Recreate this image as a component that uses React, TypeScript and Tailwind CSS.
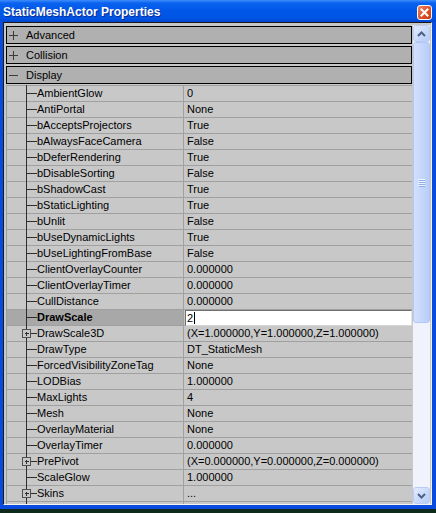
import React from 'react';

type Row = { name: string; value: string; expandable?: boolean; selected?: boolean };

const ROWS: Row[] = [
  { name: 'AmbientGlow', value: '0' },
  { name: 'AntiPortal', value: 'None' },
  { name: 'bAcceptsProjectors', value: 'True' },
  { name: 'bAlwaysFaceCamera', value: 'False' },
  { name: 'bDeferRendering', value: 'True' },
  { name: 'bDisableSorting', value: 'False' },
  { name: 'bShadowCast', value: 'True' },
  { name: 'bStaticLighting', value: 'True' },
  { name: 'bUnlit', value: 'False' },
  { name: 'bUseDynamicLights', value: 'True' },
  { name: 'bUseLightingFromBase', value: 'False' },
  { name: 'ClientOverlayCounter', value: '0.000000' },
  { name: 'ClientOverlayTimer', value: '0.000000' },
  { name: 'CullDistance', value: '0.000000' },
  { name: 'DrawScale', value: '2', selected: true },
  { name: 'DrawScale3D', value: '(X=1.000000,Y=1.000000,Z=1.000000)', expandable: true },
  { name: 'DrawType', value: 'DT_StaticMesh' },
  { name: 'ForcedVisibilityZoneTag', value: 'None' },
  { name: 'LODBias', value: '1.000000' },
  { name: 'MaxLights', value: '4' },
  { name: 'Mesh', value: 'None' },
  { name: 'OverlayMaterial', value: 'None' },
  { name: 'OverlayTimer', value: '0.000000' },
  { name: 'PrePivot', value: '(X=0.000000,Y=0.000000,Z=0.000000)', expandable: true },
  { name: 'ScaleGlow', value: '1.000000' },
  { name: 'Skins', value: '...', expandable: true },
  { name: '', value: '' },
];

const CATEGORIES = [
  { label: 'Advanced', open: false },
  { label: 'Collision', open: false },
  { label: 'Display', open: true },
];

function Tree({ expandable, blank }: { expandable?: boolean; blank?: boolean }) {
  const stroke = '#2e2e2e';
  return (
    <svg width="30" height="15" className="shrink-0 overflow-visible" shapeRendering="crispEdges">
      {expandable ? (
        <>
          <line x1="19.5" y1="-1" x2="19.5" y2="3.5" stroke={stroke} />
          <rect x="15.5" y="3.5" width="8" height="8" fill="none" stroke="#505050" />
          <line x1="17.5" y1="7.5" x2="22" y2="7.5" stroke={stroke} />
          <line x1="19.5" y1="5.5" x2="19.5" y2="10" stroke={stroke} />
          <line x1="19.5" y1="11.5" x2="19.5" y2="16" stroke={stroke} />
          <line x1="23.5" y1="7.5" x2="30" y2="7.5" stroke={stroke} />
        </>
      ) : (
        <>
          <line x1="19.5" y1="-1" x2="19.5" y2="16" stroke={stroke} />
          {!blank && <line x1="19.5" y1="7.5" x2="30" y2="7.5" stroke={stroke} />}
        </>
      )}
    </svg>
  );
}

function Category({ label, open }: { label: string; open: boolean }) {
  return (
    <div className="flex h-[18px] w-[406px] items-center border border-black bg-[#b0b0b0]">
      <svg width="9" height="9" className="ml-[2px] shrink-0" shapeRendering="crispEdges">
        <line x1="0" y1="4.5" x2="9" y2="4.5" stroke="#3a3a3a" />
        {!open && <line x1="4.5" y1="0" x2="4.5" y2="9" stroke="#3a3a3a" />}
      </svg>
      <span className="ml-[8px] leading-[16px]">{label}</span>
    </div>
  );
}

function PropRow({ row }: { row: Row }) {
  return (
    <div className="flex h-[16px] border-b border-[#a0a0a0]">
      <div className={`flex w-[176px] items-center ${row.selected ? 'bg-[#a8a8a8] font-bold' : ''}`}>
        <Tree expandable={row.expandable} blank={!row.name} />
        <span className="whitespace-nowrap leading-[15px]">{row.name}</span>
      </div>
      <div className="flex w-[229px] items-center border-l border-[#a0a0a0]">
        {row.selected ? (
          <div className="z-10 ml-px -mb-px flex h-[16px] flex-1 items-center self-start border border-[#6f6f6f] border-b-[#d6d6d6] border-r-[#e4e4e4] bg-white pl-px">
            <span className="leading-[14px]">{row.value}</span>
            <span className="ml-[1px] h-[12px] w-px bg-black" />
          </div>
        ) : (
          <span className="whitespace-nowrap pl-[3px] leading-[15px]">{row.value}</span>
        )}
      </div>
    </div>
  );
}

function ScrollButton({ up }: { up?: boolean }) {
  return (
    <div className="flex h-[17px] w-[17px] shrink-0 items-center justify-center rounded-[3px] border border-[#bccdf4] bg-[linear-gradient(135deg,#e3ecff_0%,#c9d9fb_55%,#b6cbf7_100%)]">
      <svg width="9" height="6" viewBox="0 0 9 6">
        <polyline
          points={up ? '1,5 4.5,1.5 8,5' : '1,1 4.5,4.5 8,1'}
          fill="none"
          stroke="#4d6185"
          strokeWidth="2"
        />
      </svg>
    </div>
  );
}

export default function App() {
  return (
    <div className="h-[513px] w-[436px] overflow-hidden bg-[#0d2a1b] font-['Liberation_Sans',Arial,sans-serif] text-[11px] text-black">
      <div className="flex h-[509px] flex-col bg-[#0a4bdf]">
        <div className="flex h-[22px] shrink-0 items-center justify-between bg-[linear-gradient(180deg,#3e8dfc_0%,#0a62ef_14%,#0057e7_50%,#0053e2_86%,#0343cc_100%)] pl-[3px] pr-[4px] pt-[2px]">
          <span className="text-[12px] font-bold leading-none text-white [text-shadow:1px_1px_0_#0b2a92]">
            StaticMeshActor Properties
          </span>
          <div className="flex h-[15px] w-[15px] items-center justify-center rounded-[3px] border border-white bg-[linear-gradient(135deg,#f08a62_0%,#e0542c_50%,#c63b17_100%)]">
            <svg width="9" height="9" viewBox="0 0 9 9">
              <path d="M1.5 1.5 L7.5 7.5 M7.5 1.5 L1.5 7.5" stroke="white" strokeWidth="2" strokeLinecap="square" />
            </svg>
          </div>
        </div>

        <div className="flex flex-1 pl-[3px] pr-[4px] pb-[4px]">
          <div className="flex h-[483px] flex-1 overflow-hidden border border-[#1a1a1a] border-b-[#f4f4f4] border-r-[#f0f0f0] bg-[#c8c8c8] pl-[2px] pr-px">
            <div className="flex w-[406px] flex-col gap-[2px] pt-[3px]">
              {CATEGORIES.map((c) => (
                <Category key={c.label} label={c.label} open={c.open} />
              ))}
              <div className="mt-[-1px] border-t border-l border-[#a0a0a0]">
                {ROWS.map((r, i) => (
                  <PropRow key={i} row={r} />
                ))}
              </div>
            </div>

            <div className="ml-px mt-[2px] flex w-[17px] flex-col bg-[#f0f3fb]">
              <ScrollButton up />
              <div className="flex h-[281px] shrink-0 items-center justify-center rounded-[3px] border border-[#b2c7f5] bg-[linear-gradient(90deg,#d2e0fd_0%,#c3d5fb_60%,#b8cdf8_100%)]">
                <svg width="7" height="8" shapeRendering="crispEdges">
                  {[0, 2, 4, 6].map((y) => (
                    <g key={y}>
                      <line x1="0" y1={y + 0.5} x2="7" y2={y + 0.5} stroke="#eef4ff" />
                      <line x1="1" y1={y + 1.5} x2="7" y2={y + 1.5} stroke="#8eaef0" />
                    </g>
                  ))}
                </svg>
              </div>
              <div className="flex-1" />
              <ScrollButton />
            </div>
          </div>
        </div>
      </div>
    </div>
  );
}
